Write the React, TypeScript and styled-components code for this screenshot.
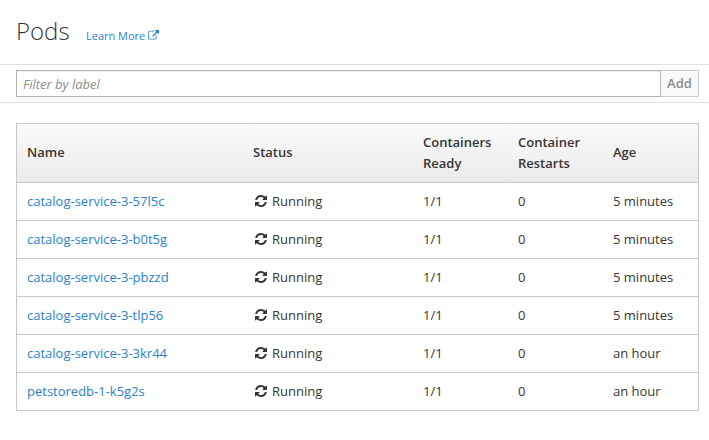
import React from "react";
import styled, { createGlobalStyle } from "styled-components";

const GlobalStyle = createGlobalStyle`
  * { box-sizing: border-box; }
  body { margin: 0; background: #fff; color: #363636; font: 13px/21px "Open Sans", sans-serif; }
`;
const Header = styled.header`
  display: flex; align-items: baseline; gap: 16.4px; height: 65px; padding: 14px 16px 0;
  border-bottom: 1px solid #dfdfdf;
`;
const Title = styled.h1`
  margin: 0; font-size: 24px; line-height: 34px; font-weight: 300;
`;
const Link = styled.a`
  color: #2a82c9; text-decoration: none;
`;
const LearnMore = styled(Link)`
  font-size: 11px; display: inline-flex; align-items: center; gap: 3px;
`;
const FilterBar = styled.div`
  display: flex; height: 38px; padding: 5px 10px 5px 16px; border-bottom: 1px solid #dfdfdf;
`;
const FilterInput = styled.input`
  flex: 1; height: 27px; padding: 0 6px; border: 1px solid #b3b3b3; border-radius: 0;
  box-shadow: inset 0 1px 1px rgba(0,0,0,.075); font: 13px "Open Sans", sans-serif; outline: 0;
  &::placeholder { color: #8c8c8c; font-style: italic; opacity: 1; }
`;
const AddButton = styled.button`
  width: 38px; height: 27px; padding: 0 0 2px; border: 1px solid #ccc; border-left: 0; background: #fafafa;
  color: #8b8d8f; font: 600 13px "Open Sans", sans-serif;
`;
const Table = styled.table`
  width: 683px; margin: 20px 0 0 16px; border-collapse: separate; border-spacing: 0;
  table-layout: fixed; border: 1px solid #c8c8c8;
`;
const HeadRow = styled.tr`
  height: 58px; background: linear-gradient(#fafafa, #ebebeb);
`;
const Th = styled.th<{ $w: number }>`
  width: ${(p) => p.$w}px; padding: 0 10px 1px; text-align: left; font-weight: 600;
`;
const Row = styled.tr`
  height: 38px;
`;
const Td = styled.td`
  padding: 0 10px; border-top: 1px solid #c8c8c8;
`;
const Status = styled.span`
  display: flex; align-items: center; gap: 5px; padding-left: 2px;
  svg { margin-bottom: 1px; }
`;

const RefreshIcon = () => (
  <svg width="12" height="14" viewBox="0 0 1536 1792" fill="currentColor">
    <path d="M1511 1056q0 5-1 7-64 268-268 434.500t-478 166.500q-146 0-282.500-55t-243.500-157l-129 129q-19 19-45 19t-45-19-19-45v-448q0-26 19-45t45-19h448q26 0 45 19t19 45-19 45l-137 137q71 66 161 102t187 36q134 0 250-65t186-179q11-17 53-117 8-23 30-23h192q13 0 22.500 9.500t9.500 22.500zm25-800v448q0 26-19 45t-45 19h-448q-26 0-45-19t-19-45 19-45l138-138q-148-137-349-137-134 0-250 65t-186 179q-11 17-53 117-8 23-30 23h-199q-13 0-22.500-9.500t-9.500-22.500v-7q65-268 270-434.500t480-166.500q146 0 284 55.500t245 156.500l130-129q19-19 45-19t45 19 19 45z" />
  </svg>
);
const ExternalIcon = () => (
  <svg width="11" height="11" viewBox="0 0 1792 1792" fill="currentColor">
    <path d="M1408 928v320q0 119-84.500 203.500t-203.500 84.500h-832q-119 0-203.500-84.500t-84.500-203.500v-832q0-119 84.500-203.500t203.500-84.500h704q14 0 23 9t9 23v64q0 14-9 23t-23 9h-704q-66 0-113 47t-47 113v832q0 66 47 113t113 47h832q66 0 113-47t47-113v-320q0-14 9-23t23-9h64q14 0 23 9t9 23zm384-864v512q0 26-19 45t-45 19-45-19l-176-176-652 652q-10 10-23 10t-23-10l-114-114q-10-10-10-23t10-23l652-652-176-176q-19-19-19-45t19-45 45-19h512q26 0 45 19t19 45z" />
  </svg>
);

const pods = [
  ["catalog-service-3-57l5c", "5 minutes"],
  ["catalog-service-3-b0t5g", "5 minutes"],
  ["catalog-service-3-pbzzd", "5 minutes"],
  ["catalog-service-3-tlp56", "5 minutes"],
  ["catalog-service-3-3kr44", "an hour"],
  ["petstoredb-1-k5g2s", "an hour"],
];

export default function App() {
  return (
    <>
      <GlobalStyle />
      <Header>
        <Title>Pods</Title>
        <LearnMore>Learn More<ExternalIcon /></LearnMore>
      </Header>
      <FilterBar>
        <FilterInput placeholder="Filter by label" />
        <AddButton>Add</AddButton>
      </FilterBar>
      <Table>
        <thead>
          <HeadRow>
            <Th $w={226}>Name</Th>
            <Th $w={170}>Status</Th>
            <Th $w={95}>Containers Ready</Th>
            <Th $w={95}>Container Restarts</Th>
            <Th $w={95}>Age</Th>
          </HeadRow>
        </thead>
        <tbody>
          {pods.map(([name, age]) => (
            <Row key={name}>
              <Td><Link>{name}</Link></Td>
              <Td><Status><RefreshIcon />Running</Status></Td>
              <Td>1/1</Td>
              <Td>0</Td>
              <Td>{age}</Td>
            </Row>
          ))}
        </tbody>
      </Table>
    </>
  );
}
